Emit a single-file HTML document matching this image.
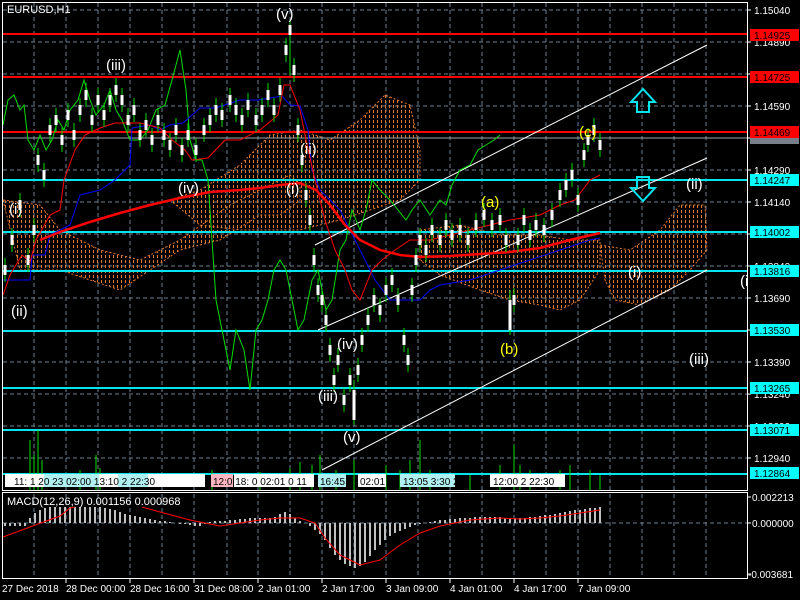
<!DOCTYPE html>
<html><head><meta charset="utf-8"><style>
html,body{margin:0;padding:0;background:#000;}
svg{display:block;font-family:"Liberation Sans",sans-serif;}
.lb{fill:#fff;font-size:15px;}
.ax{fill:#fff;font-size:10px;}
</style></head><body>
<svg width="800" height="600" viewBox="0 0 800 600" xmlns="http://www.w3.org/2000/svg">
<defs>
<pattern id="cl" width="4" height="5" patternUnits="userSpaceOnUse"><rect x="1" y="0" width="1" height="3" fill="#e07830"/></pattern>
</defs>
<rect width="800" height="600" fill="#000"/>
<g stroke="#6d7f8f" stroke-dasharray="4,3" stroke-width="1">
<path d="M3 10H747M3 42H747M3 74H747M3 106H747M3 170H747M3 202H747M3 234H747M3 266H747M3 298H747M3 362H747M3 394H747M3 426H747M3 458H747"/>
<path d="M34 3V490M66 3V490M98 3V490M130 3V490M162 3V490M194 3V490M227 3V490M258 3V490M290 3V490M322 3V490M354 3V490M386 3V490M418 3V490M450 3V490M482 3V490M514 3V490M546 3V490M578 3V490M610 3V490M642 3V490M674 3V490M706 3V490"/>
<path d="M34 494V578M66 494V578M98 494V578M130 494V578M162 494V578M194 494V578M227 494V578M258 494V578M290 494V578M322 494V578M354 494V578M386 494V578M418 494V578M450 494V578M482 494V578M514 494V578M546 494V578M578 494V578M610 494V578M642 494V578M674 494V578M706 494V578"/>
<path d="M3 523H747"/>
</g>
<g fill="url(#cl)" stroke="#e07830" stroke-width="1" stroke-dasharray="2,2">
<path d="M3 200 L40 205 L60 230 L100 250 L140 260 L180 240 L230 205 L260 190 L290 175 L300 185 L300 200 L280 215 L260 215 L220 240 L180 250 L150 270 L120 290 L90 280 L60 270 L20 270 Z"/>
<path d="M170 200 L200 190 L240 165 L270 135 L300 130 L330 140 L360 120 L385 95 L410 105 L420 150 L420 180 L400 200 L370 210 L340 220 L300 230 L270 230 L240 230 L200 225 Z"/>
<path d="M420 230 L460 225 L500 235 L540 235 L570 240 L600 240 L600 270 L580 300 L560 310 L540 305 L510 300 L480 290 L440 275 L420 260 Z"/>
<path d="M600 245 L630 250 L660 230 L680 205 L705 205 L707 250 L690 270 L670 290 L640 305 L615 300 L605 280 Z"/>
</g>
<g stroke-width="2">
<path d="M3 34H747M3 77H747M3 132H747" stroke="#ff0000"/>
<path d="M3 180H747M3 232H747M3 271H747M3 331H747M3 388H747M3 430H747M3 474H747" stroke="#00e5ee"/>
</g>
<path d="M3 138H747" stroke="#9aa4ad" stroke-width="1"/>
<g stroke="#00dd00" stroke-width="1">
<path d="M30 490V440M34 490V455M38 490V430M42 490V460M80 490V470M96 490V455M100 490V468M212 490V470M260 490V472M290 490V468M300 490V462M312 490V465M320 490V455M336 490V470M354 490V460M386 490V465M400 490V470M410 490V460M420 490V440M430 490V470M470 490V475M500 490V465M514 490V445M520 490V465M530 490V470M560 490V470M570 490V465M590 490V470M600 490V475"/>
</g>
<g font-size="10" font-family="Liberation Sans,sans-serif">
<rect x="5" y="474" width="200" height="13" fill="#fff"/>
<rect x="44" y="474" width="55" height="13" fill="#b0f0f0"/>
<rect x="118" y="474" width="30" height="13" fill="#b0f0f0"/>
<rect x="211" y="474" width="22" height="13" fill="#ffb6c1"/>
<rect x="234" y="474" width="80" height="13" fill="#fff"/>
<rect x="318" y="474" width="28" height="13" fill="#b0f0f0"/>
<rect x="358" y="474" width="28" height="13" fill="#fff"/>
<rect x="400" y="474" width="55" height="13" fill="#b0f0f0"/>
<rect x="490" y="474" width="75" height="13" fill="#fff"/>
<text x="14" y="485" fill="#000">11:   1 20 23 02:00    13:10 2 22:30</text>
<text x="213" y="485" fill="#000">12:0 18: 0 02:01 0 11</text>
<text x="320" y="485" fill="#000">16:45</text>
<text x="360" y="485" fill="#000">02:01</text>
<text x="403" y="485" fill="#000">13:05 3:30 2</text>
<text x="493" y="485" fill="#000">12:00 2 22:30</text>
</g>
<g stroke="#fff" stroke-width="1">
<path d="M315 245L707 45M318 330L707 158M322 470L707 270"/>
</g>
<polyline fill="none" stroke="#00dd00" stroke-width="1" points="3,125 8,100 14,95 20,110 24,105 28,140 34,150 40,135 46,150 52,140 58,120 64,130 70,110 78,100 84,80 90,100 96,115 104,105 110,90 116,110 122,120 130,140 140,140 148,130 156,110 165,105 172,80 180,50 186,90 190,140 196,160 202,160 208,180 212,240 216,300 224,340 230,370 236,330 244,350 250,390 256,330 262,320 268,300 274,270 280,260 286,270 292,300 298,330 304,320 312,280 318,270 326,310 332,300 340,250 346,240 352,210 360,230 366,210 372,180 380,190 390,200 398,210 406,220 412,210 420,200 430,215 440,200 446,205 452,185 460,170 470,165 478,150 486,145 494,140 500,135"/>
<polyline fill="none" stroke="#0000ff" stroke-width="1" points="3,280 30,280 32,255 45,255 50,235 70,225 80,195 100,190 115,180 130,165 132,128 150,125 160,130 170,125 183,123 200,108 215,108 228,104 240,100 258,100 270,98 282,96 290,105 300,106 308,130 312,170 320,190 340,210 350,230 360,250 375,280 390,300 400,300 420,300 430,290 440,285 470,280 500,270 530,260 560,250 590,240 600,238"/>
<polyline fill="none" stroke="#ff0000" stroke-width="1" points="3,295 10,275 22,255 30,262 36,240 50,215 60,210 64,180 75,150 85,135 100,128 115,123 140,123 160,128 172,140 185,150 192,160 208,158 225,140 240,140 260,130 278,115 284,85 290,85 296,100 300,110 306,140 315,180 325,220 335,250 345,270 352,290 360,300 372,270 382,260 395,250 410,240 430,240 450,235 470,230 490,225 510,220 540,215 560,205 575,200 590,180 600,175"/>
<polyline fill="none" stroke="#ff0000" stroke-width="2.5" points="40,240 60,232 90,222 120,213 150,205 180,198 210,192 240,190 260,188 280,185 300,183 316,190 330,205 345,225 360,240 380,250 400,255 420,257 450,256 480,254 510,252 540,248 570,240 600,233"/>
<g fill="none">
<path stroke="#00dd00" stroke-width="1" d="M5 258V282M12 228V252M20 193V217M28 248V272M34 218V242M38 148V172M44 163V187M50 118V142M56 108V132M62 128V152M68 103V127M74 123V147M80 98V122M86 83V107M92 108V132M98 88V112M104 103V127M110 88V112M116 78V102M122 88V112M128 108V132M134 98V122M140 123V147M146 113V137M152 128V152M158 108V132M164 123V147M170 133V157M176 118V142M182 138V162M188 123V147M196 138V162M204 118V142M210 108V132M216 98V122M222 103V127M230 88V112M236 98V122M242 108V132M248 93V117M256 108V132M262 98V122M268 83V107M274 98V122M280 78V102M286 38V62M290 20V75M294 58V82M298 118V142M302 148V172M306 183V207M310 208V232M314 248V272M318 278V302M322 288V312M326 308V332M330 338V362M334 368V392M338 348V372M344 388V412M350 368V392M354 380V425M358 358V382M362 328V352M368 308V332M374 288V312M380 298V322M386 278V302M392 268V292M398 288V312M404 328V352M408 348V372M412 278V302M416 248V272M420 228V252M426 238V262M432 218V242M440 228V252M446 213V237M452 223V247M460 218V242M468 228V252M476 213V237M484 203V227M492 213V237M500 208V232M506 228V252M510 290V335M514 288V312M518 228V252M524 208V232M530 223V247M536 213V237M544 218V242M552 203V227M560 183V207M566 173V197M572 163V187M578 188V212M584 143V167M588 128V152M594 118V142M600 133V157"/>
<path stroke="#fff" stroke-width="3" d="M5 265V275M12 235V245M20 200V210M28 255V265M34 225V235M38 155V165M44 170V180M50 125V135M56 115V125M62 135V145M68 110V120M74 130V140M80 105V115M86 90V100M92 115V125M98 95V105M104 110V120M110 95V105M116 85V95M122 95V105M128 115V125M134 105V115M140 130V140M146 120V130M152 135V145M158 115V125M164 130V140M170 140V150M176 125V135M182 145V155M188 130V140M196 145V155M204 125V135M210 115V125M216 105V115M222 110V120M230 95V105M236 105V115M242 115V125M248 100V110M256 115V125M262 105V115M268 90V100M274 105V115M280 85V95M286 45V55M290 25V35M294 65V75M298 125V135M302 155V165M306 190V200M310 215V225M314 255V265M318 285V295M322 295V305M326 315V325M330 345V355M334 375V385M338 355V365M344 395V405M350 375V385M354 390V420M358 365V375M362 335V345M368 315V325M374 295V305M380 305V315M386 285V295M392 275V285M398 295V305M404 335V345M408 355V365M412 285V295M416 255V265M420 235V245M426 245V255M432 225V235M440 235V245M446 220V230M452 230V240M460 225V235M468 235V245M476 220V230M484 210V220M492 220V230M500 215V225M506 235V245M510 300V330M514 295V305M518 235V245M524 215V225M530 230V240M536 220V230M544 225V235M552 210V220M560 190V200M566 180V190M572 170V180M578 195V205M584 150V160M588 135V145M594 125V135M600 140V150"/>
</g>
<g fill="none" stroke="#00e5ee" stroke-width="2">
<path d="M637 112V102H631L643 89L655 102H649V112Z"/>
<path d="M637 177V188H631L643 201L655 188H649V177Z"/>
</g>
<text class="lb" x="276" y="19">(v)</text>
<text class="lb" x="106" y="70">(iii)</text>
<text class="lb" x="300" y="154">(ii)</text>
<text class="lb" x="178" y="193">(iv)</text>
<text class="lb" x="286" y="194">(i)</text>
<text class="lb" x="9" y="214">(i)</text>
<text class="lb" x="11" y="316">(ii)</text>
<text class="lb" x="337" y="349">(iv)</text>
<text class="lb" x="318" y="401">(iii)</text>
<text class="lb" x="343" y="442">(v)</text>
<text class="lb" x="481" y="207" style="fill:#ffff00">(a)</text>
<text class="lb" x="500" y="354" style="fill:#ffff00">(b)</text>
<text class="lb" x="579" y="137" style="fill:#ffff00">(c)</text>
<text class="lb" x="686" y="189">(ii)</text>
<text class="lb" x="628" y="277">(i)</text>
<text class="lb" x="689" y="364">(iii)</text>
<text class="lb" x="740" y="286">(i</text>
<text x="7" y="13" fill="#fff" font-size="11">EURUSD,H1</text>
<path fill="none" stroke="#c0c0c0" stroke-width="2" d="M5 523V526M10 523V526M15 523V526M20 523V526M25 523V526M30 523V518M35 523V513M40 523V510M45 523V508M50 523V507M55 523V507M60 523V507M65 523V507M70 523V507M75 523V507M80 523V507M85 523V507M90 523V507M95 523V507M100 523V507M105 523V508M110 523V509M115 523V510M120 523V512M125 523V514M130 523V515M135 523V516M140 523V517M145 523V518M150 523V519M155 523V520M160 523V521M165 523V521M170 523V522M180 523V524M185 523V524M190 523V525M195 523V526M200 523V526M205 523V524M210 523V522M215 523V521M220 523V521M225 523V521M230 523V520M235 523V520M240 523V519M245 523V519M250 523V518M255 523V518M260 523V518M265 523V518M270 523V518M275 523V517M280 523V514M285 523V512M290 523V514M295 523V518M300 523V521M310 523V526M315 523V530M320 523V534M325 523V540M330 523V548M335 523V555M340 523V560M345 523V564M350 523V566M355 523V568M360 523V566M365 523V562M370 523V556M375 523V550M380 523V545M385 523V540M390 523V536M395 523V533M400 523V531M405 523V529M410 523V527M415 523V525M420 523V524M430 523V522M435 523V521M440 523V520M445 523V520M450 523V519M455 523V519M460 523V518M465 523V518M470 523V518M475 523V517M480 523V517M485 523V517M490 523V517M495 523V517M500 523V517M505 523V518M510 523V518M515 523V518M520 523V518M525 523V518M530 523V517M535 523V517M540 523V516M545 523V515M550 523V515M555 523V514M560 523V513M565 523V512M570 523V511M575 523V510M580 523V510M585 523V509M590 523V508M595 523V508M600 523V507"/>
<polyline fill="none" stroke="#ff0000" stroke-width="1" points="3,537 30,527 60,516 70,508 75,507"/>
<polyline fill="none" stroke="#ff0000" stroke-width="1" points="142,507 160,512 190,520 210,524 220,526 240,523 260,520 280,518 300,518 315,523 325,538 340,555 360,565 380,560 400,545 420,533 440,526 470,520 500,518 520,519 540,518 560,516 580,513 600,510"/>
<text x="7" y="505" fill="#fff" font-size="11">MACD(12,26,9) 0.001156 0.000968</text>
<g stroke="#fff" stroke-width="1" fill="none">
<rect x="2.5" y="2.5" width="745" height="488"/>
<rect x="2.5" y="492.5" width="745" height="86"/>
</g>
<g stroke="#fff"><path d="M747 10h4M747 42h4M747 74h4M747 106h4M747 138h4M747 170h4M747 202h4M747 234h4M747 266h4M747 298h4M747 330h4M747 362h4M747 394h4M747 426h4M747 458h4M747 497h4M747 523h4M747 574h4M66 579v4M130 579v4M194 579v4M258 579v4M322 579v4M386 579v4M450 579v4M514 579v4M578 579v4"/></g>
<g class="ax">
<text x="754" y="14">1.15040</text><text x="754" y="46">1.14890</text><text x="754" y="78">1.14740</text>
<text x="754" y="110">1.14590</text><text x="754" y="174">1.14290</text><text x="754" y="206">1.14140</text>
<text x="754" y="238">1.13990</text><text x="754" y="270">1.13840</text><text x="754" y="302">1.13690</text>
<text x="754" y="334">1.13540</text><text x="754" y="366">1.13390</text><text x="754" y="398">1.13240</text>
<text x="754" y="430">1.13090</text><text x="754" y="462">1.12940</text>
<text x="752" y="501">0.002213</text><text x="752" y="527">0.000000</text><text x="748" y="578">-0.003681</text>
</g>
<g font-size="10">
<rect x="750" y="29" width="49" height="12" fill="#ff0000"/><text x="754" y="39" fill="#000">1.14925</text>
<rect x="750" y="71" width="49" height="12" fill="#ff0000"/><text x="754" y="81" fill="#000">1.14725</text>
<rect x="750" y="126" width="49" height="12" fill="#ff0000"/><text x="754" y="136" fill="#000">1.14469</text>
<rect x="750" y="138" width="49" height="6" fill="#778088"/>
<rect x="750" y="174" width="49" height="12" fill="#00ffff"/><text x="754" y="184" fill="#000">1.14247</text>
<rect x="750" y="226" width="49" height="12" fill="#00ffff"/><text x="754" y="236" fill="#000">1.14002</text>
<rect x="750" y="265" width="49" height="12" fill="#00ffff"/><text x="754" y="275" fill="#000">1.13816</text>
<rect x="750" y="324" width="49" height="12" fill="#00ffff"/><text x="754" y="334" fill="#000">1.13530</text>
<rect x="750" y="382" width="49" height="12" fill="#00ffff"/><text x="754" y="392" fill="#000">1.13265</text>
<rect x="750" y="424" width="49" height="12" fill="#00ffff"/><text x="754" y="434" fill="#000">1.13071</text>
<rect x="750" y="467" width="49" height="12" fill="#00ffff"/><text x="754" y="477" fill="#000">1.12864</text>
</g>
<g class="ax">
<text x="2" y="592">27 Dec 2018</text><text x="66" y="592">28 Dec 00:00</text><text x="130" y="592">28 Dec 16:00</text>
<text x="194" y="592">31 Dec 08:00</text><text x="258" y="592">2 Jan 01:00</text><text x="322" y="592">2 Jan 17:00</text>
<text x="386" y="592">3 Jan 09:00</text><text x="450" y="592">4 Jan 01:00</text><text x="514" y="592">4 Jan 17:00</text>
<text x="578" y="592">7 Jan 09:00</text>
</g>
</svg>
</body></html>
